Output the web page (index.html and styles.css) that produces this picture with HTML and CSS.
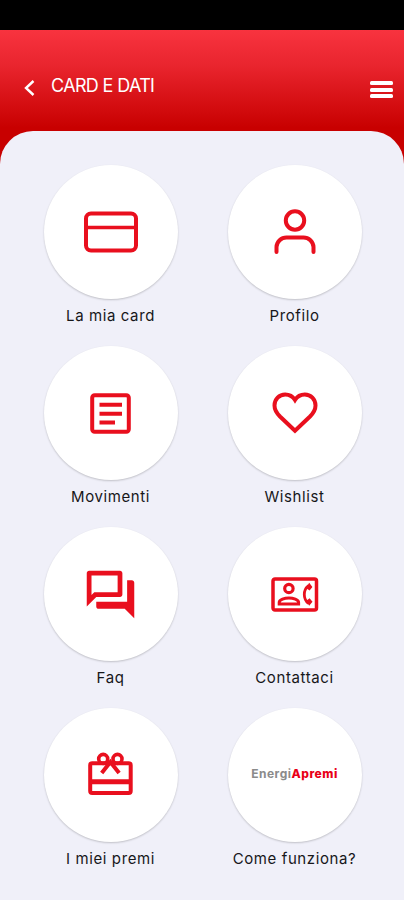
FILE: index.html
```html
<!DOCTYPE html>
<html lang="it">
<head>
    <meta charset="UTF-8">
    <meta name="viewport" content="width=device-width, initial-scale=1">
    <title>Card e dati</title>
    <link rel="stylesheet" href="styles.css">
</head>
<body>
    <div class="status-bar"></div>

    <header class="header">
        <svg class="back" width="12" height="18" viewBox="0 0 12 18">
            <path d="M10.500 2L3 9L10.500 16"/>
        </svg>
        <h1>CARD E DATI</h1>
        <div class="menu">
            <span></span>
            <span></span>
            <span></span>
        </div>
    </header>

    <main class="panel">
        <div class="item">
            <div class="circle">
                <svg class="line" width="54" height="42" viewBox="0 0 54 42">
                    <rect x="2" y="2.500" width="50" height="37" rx="5"/>
                    <path d="M2 16.500h50" stroke-width="3.500"/>
                </svg>
            </div>
            <p>La mia card</p>
        </div>

        <div class="item">
            <div class="circle">
                <svg class="line" width="42" height="46" viewBox="0 0 42 46">
                    <circle cx="21" cy="11.500" r="9.200"/>
                    <path d="M2.500 43v-5a10 10 0 0 1 10-9.500h17a10 10 0 0 1 10 9.500v5" stroke-linecap="round"/>
                </svg>
            </div>
            <p>Profilo</p>
        </div>

        <div class="item">
            <div class="circle">
                <svg class="line" width="41" height="41" viewBox="0 0 41 41">
                    <rect x="2.200" y="2.200" width="36.600" height="36.600" rx="2.500"/>
                    <path d="M9.500 11.800h22.500M9.500 20.700h22.500M9.500 29.600h15.500"/>
                </svg>
            </div>
            <p>Movimenti</p>
        </div>

        <div class="item">
            <div class="circle">
                <svg class="line" width="46" height="42" viewBox="0 0 46 42">
                    <path d="M23 38.800L8 24.500C4.500 21 2.500 17.800 2.500 13.500C2.500 7.300 7.200 2.500 13.200 2.500C17 2.500 20.800 4.500 23 8C25.200 4.500 29 2.500 32.800 2.500C38.800 2.500 43.500 7.300 43.500 13.500C43.500 17.800 41.500 21 38 24.500Z"/>
                </svg>
            </div>
            <p>Wishlist</p>
        </div>

        <div class="item">
            <div class="circle">
                <svg class="solid" width="57" height="57" viewBox="0 0 24 24">
                    <path d="M15 4v7H5.170L4 12.170V4h11m1-2H3c-.55 0-1 .45-1 1v14l4-4h10c.55 0 1-.45 1-1V3c0-.55-.45-1-1-1zm5 4h-2v9H6v2c0 .55.45 1 1 1h11l4 4V7c0-.55-.45-1-1-1z"/>
                </svg>
            </div>
            <p>Faq</p>
        </div>

        <div class="item">
            <div class="circle">
                <svg class="line" width="48" height="35" viewBox="0 0 48 35">
                    <rect x="2" y="2" width="43.500" height="31" rx="2" stroke-width="3.500"/>
                    <circle cx="17.900" cy="11.500" r="4.200" stroke-width="3.200"/>
                    <path d="M8.200 27v-1.500c0-2.800 5.500-4.600 9.700-4.600s9.700 1.800 9.700 4.600V27z" stroke-width="3"/>
                    <path d="M37.500 8.500c-5.600 4.500-5.600 13.500 0 18" stroke-width="2.800"/>
                    <path class="fill" d="M38.200 5.800l3.200 4.300-2.800 3.400-3.600-2.500zM35 24l3.600-2.700 2.900 3.500-3.300 4z"/>
                </svg>
            </div>
            <p>Contattaci</p>
        </div>

        <div class="item">
            <div class="circle">
                <svg class="line gift" width="45" height="44" viewBox="0 0 45 44">
                    <rect x="2.200" y="11.200" width="40.500" height="29.800" rx="2"/>
                    <path d="M2 29.700h41" stroke-width="5"/>
                    <circle cx="15.200" cy="6.900" r="4.500" stroke-width="3.600"/>
                    <circle cx="29.500" cy="6.900" r="4.500" stroke-width="3.600"/>
                    <path d="M13.700 21l8.700-11 8.700 11" stroke-width="4"/>
                </svg>
            </div>
            <p>I miei premi</p>
        </div>

        <div class="item">
            <div class="circle">
                <div class="logo">Energi<b>Apremi</b></div>
            </div>
            <p>Come funziona?</p>
        </div>
    </main>
</body>
</html>
```
FILE: styles.css
```css
body {
  margin: 0;
  height: 900px;
  display: flex;
  flex-direction: column;
  overflow: hidden;
  background: #c80000;
  font-family: "Inter", "Liberation Sans", sans-serif;
}

.status-bar {
  height: 30px;
  background: #000;
}

.header {
  height: 100.500px;
  box-sizing: border-box;
  padding: 11px 11.500px 0 23px;
  display: flex;
  align-items: center;
  background: linear-gradient(#f8333f, #e9252e 35%, #c80000 97%);
}

.back {
  margin-top: 5px;
  fill: none;
  stroke: #fff;
  stroke-width: 2.4;
}

h1 {
  margin: 0 auto 0 16px;
  color: #fff;
  font-family: "Inter", sans-serif;
  font-size: 18px;
  font-weight: 400;
  line-height: 24px;
  letter-spacing: -0.65px;
}

.menu {
  width: 23px;
  margin-top: 8px;
  display: flex;
  flex-direction: column;
  gap: 2.500px;
}

.menu span {
  height: 4px;
  border-radius: 1.500px;
  background: #fff;
}

.panel {
  flex: 1;
  padding: 34.500px 42px 0 43px;
  display: grid;
  grid-template-columns: 135px 135px;
  grid-auto-rows: 181px;
  justify-content: space-between;
  align-content: start;
  border-radius: 33px 33px 0 0;
  background: #f0f0f9;
}

.item {
  display: flex;
  flex-direction: column;
  align-items: center;
}

.circle {
  width: 134px;
  height: 134px;
  flex: none;
  display: flex;
  align-items: center;
  justify-content: center;
  border-radius: 50%;
  background: #fff;
  box-shadow: 0 1px 2px rgba(0, 0, 0, 0.2);
}

.line {
  fill: none;
  stroke: #e90f1e;
  stroke-width: 4;
}

.solid,
.fill {
  fill: #e90f1e;
  stroke: none;
}

.gift {
  margin-bottom: 2px;
}

.item p {
  margin: 7px 0 0;
  color: #17171a;
  font-size: 15px;
  line-height: 20px;
  letter-spacing: 0.6px;
  white-space: nowrap;
}

.logo {
  color: #8b8b8b;
  font-size: 12px;
  font-weight: 700;
  line-height: 14px;
  letter-spacing: 0.5px;
  margin-bottom: 2px;
}

.logo b {
  color: #e90018;
  font-weight: 800;
}
```
